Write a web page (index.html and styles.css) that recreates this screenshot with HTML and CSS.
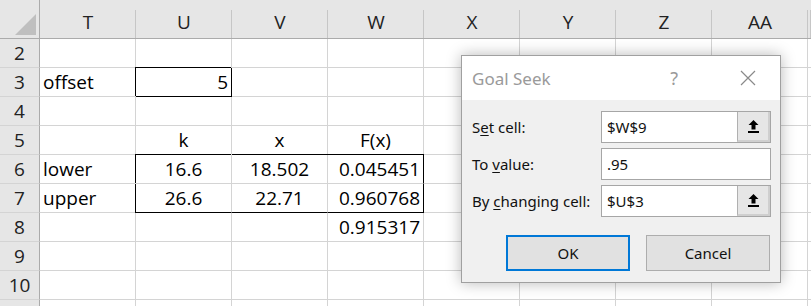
FILE: index.html
```html
<!DOCTYPE html>
<html>
<head>
<meta charset="utf-8">
<link rel="stylesheet" href="styles.css">
</head>
<body>
<div class="sheet">
  <div class="corner"><svg width="22" height="22" viewBox="0 0 22 22"><polygon points="21,0 21,21 0,21" fill="#bfbfbf"/></svg></div>
  <div class="ch">T</div><div class="ch">U</div><div class="ch">V</div><div class="ch">W</div><div class="ch">X</div><div class="ch">Y</div><div class="ch">Z</div><div class="ch">AA</div><div class="ch edge"></div>

  <div class="rh">2</div><div class="c"></div><div class="c"></div><div class="c"></div><div class="c"></div><div class="c"></div><div class="c"></div><div class="c"></div><div class="c"></div><div class="c edge"></div>

  <div class="rh">3</div><div class="c">offset</div><div class="c r box-all">5</div><div class="c"></div><div class="c"></div><div class="c"></div><div class="c"></div><div class="c"></div><div class="c"></div><div class="c edge"></div>

  <div class="rh">4</div><div class="c"></div><div class="c"></div><div class="c"></div><div class="c"></div><div class="c"></div><div class="c"></div><div class="c"></div><div class="c"></div><div class="c edge"></div>

  <div class="rh">5</div><div class="c"></div><div class="c m">k</div><div class="c m">x</div><div class="c m">F(x)</div><div class="c"></div><div class="c"></div><div class="c"></div><div class="c"></div><div class="c edge"></div>

  <div class="rh">6</div><div class="c">lower</div><div class="c m box-tl">16.6</div><div class="c m box-t">18.502</div><div class="c r box-tr">0.045451</div><div class="c"></div><div class="c"></div><div class="c"></div><div class="c"></div><div class="c edge"></div>

  <div class="rh">7</div><div class="c">upper</div><div class="c m box-bl">26.6</div><div class="c m box-b">22.71</div><div class="c r box-br">0.960768</div><div class="c"></div><div class="c"></div><div class="c"></div><div class="c"></div><div class="c edge"></div>

  <div class="rh">8</div><div class="c"></div><div class="c"></div><div class="c"></div><div class="c r">0.915317</div><div class="c"></div><div class="c"></div><div class="c"></div><div class="c"></div><div class="c edge"></div>

  <div class="rh">9</div><div class="c"></div><div class="c"></div><div class="c"></div><div class="c"></div><div class="c"></div><div class="c"></div><div class="c"></div><div class="c"></div><div class="c edge"></div>

  <div class="rh">10</div><div class="c"></div><div class="c"></div><div class="c"></div><div class="c"></div><div class="c"></div><div class="c"></div><div class="c"></div><div class="c"></div><div class="c edge"></div>

  <div class="rh"></div><div class="c"></div><div class="c"></div><div class="c"></div><div class="c"></div><div class="c"></div><div class="c"></div><div class="c"></div><div class="c"></div><div class="c edge"></div>
</div>

<div class="dialog">
  <div class="titlebar">
    <span class="title">Goal Seek</span>
    <span class="help">?</span>
    <svg class="close" width="16" height="16" viewBox="0 0 16 16"><path d="M1 1 L15 15 M15 1 L1 15" stroke="#8a8a8a" stroke-width="1.2" fill="none"/></svg>
  </div>
  <div class="body">
    <div class="field">
      <label class="lbl">S<u>e</u>t cell:</label>
      <div class="input"><span class="val">$W$9</span>
        <span class="pick"><svg width="11" height="13" viewBox="0 0 11 13"><polygon points="5.5,0 10.5,5 7.5,5 7.5,9.5 3.5,9.5 3.5,5 0.5,5" fill="#000"/><rect x="0" y="11" width="11" height="2" fill="#000"/></svg></span>
      </div>
    </div>
    <div class="field">
      <label class="lbl">To <u>v</u>alue:</label>
      <div class="input"><span class="val">.95</span></div>
    </div>
    <div class="field">
      <label class="lbl">By <u>c</u>hanging cell:</label>
      <div class="input"><span class="val">$U$3</span>
        <span class="pick"><svg width="11" height="13" viewBox="0 0 11 13"><polygon points="5.5,0 10.5,5 7.5,5 7.5,9.5 3.5,9.5 3.5,5 0.5,5" fill="#000"/><rect x="0" y="11" width="11" height="2" fill="#000"/></svg></span>
      </div>
    </div>
    <div class="buttons">
      <button class="btn ok">OK</button>
      <button class="btn">Cancel</button>
    </div>
  </div>
</div>
</body>
</html>
```

FILE: styles.css
```css
html, body {
  margin: 0;
  padding: 0;
  background: #fff;
  overflow: hidden;
}
body {
  width: 811px;
  height: 306px;
  position: relative;
}
.sheet {
  display: grid;
  grid-template-columns: 40px repeat(8, 96px) 3px;
  grid-template-rows: 39px repeat(9, 29px) 7px;
  font-family: "Open Sans", sans-serif;
  font-size: 19px;
  color: #000;
  overflow: hidden;
  height: 306px;
}
.sheet > div {
  box-sizing: border-box;
  display: flex;
  align-items: flex-end;
  line-height: 26px;
  white-space: nowrap;
}
.corner {
  background: #e6e6e6;
  border-right: 1px solid #ababab;
  border-bottom: 1px solid #ababab;
  justify-content: flex-end;
  align-items: flex-start !important;
  padding: 14px 2px 0 0;
}
.corner svg { display: block; }
.ch {
  background: #e6e6e6 linear-gradient(#c6c6c6, #c6c6c6) right bottom / 1px 28px no-repeat;
  border-bottom: 1px solid #ababab;
  justify-content: center;
  color: #222;
  padding-bottom: 3px;
}
.rh {
  background: #e6e6e6;
  border-right: 1px solid #ababab;
  border-bottom: 1px solid #d4d4d4;
  justify-content: center;
  color: #222;
  padding-bottom: 1px;
}
.c {
  border-right: 1px solid #d4d4d4;
  border-bottom: 1px solid #d4d4d4;
  padding: 0 3px 1px 3px;
}
.edge { border-right: none !important; }
.r { justify-content: flex-end; }
.m { justify-content: center; }

.box-all { border-color: #000 !important; box-shadow: -1px -1px 0 #000; }
.box-tl { box-shadow: -1px -1px 0 #000; }
.box-t { box-shadow: 0 -1px 0 #000; }
.box-tr { box-shadow: 0 -1px 0 #000; border-right-color: #000 !important; }
.box-bl { box-shadow: -1px 0 0 #000; border-bottom-color: #000 !important; }
.box-b { border-bottom-color: #000 !important; }
.box-br { border-right-color: #000 !important; border-bottom-color: #000 !important; }

.dialog {
  position: absolute;
  left: 461px;
  top: 55px;
  width: 320px;
  height: 228px;
  box-sizing: border-box;
  border: 1px solid #a0a0a0;
  background: #f0f0f0;
  box-shadow: 0 0 14px rgba(0, 0, 0, 0.28);
  font-family: "Noto Sans", sans-serif;
  display: flex;
  flex-direction: column;
}
.titlebar {
  height: 44px;
  background: #fff;
  display: flex;
  align-items: center;
  padding: 0 24px 0 10px;
}
.title {
  font-size: 17px;
  color: #9a9a9a;
  flex: 1;
}
.help {
  font-size: 18px;
  color: #9a9a9a;
  margin-right: 62px;
}
.close { display: block; }
.body {
  padding: 11px 9px 0 10px;
  display: flex;
  flex-direction: column;
  gap: 5px;
}
.field {
  display: flex;
  align-items: center;
  height: 32px;
}
.lbl {
  width: 129px;
  font-size: 15px;
  color: #111;
}
.lbl u { text-underline-offset: 2px; }
.input {
  flex: 1;
  height: 32px;
  box-sizing: border-box;
  background: #fff;
  border: 1px solid #a6a6a6;
  display: flex;
  align-items: center;
}
.val {
  flex: 1;
  font-size: 15px;
  padding-left: 5px;
  color: #111;
}
.pick {
  width: 33px;
  height: 30px;
  box-sizing: border-box;
  background: #e6e6e6;
  border-left: 1px solid #b0b0b0;
  border-right: 2px solid #cfcfcf;
  border-bottom: 2px solid #cfcfcf;
  display: flex;
  align-items: center;
  justify-content: center;
}
.pick svg { display: block; }
.buttons {
  display: flex;
  justify-content: flex-end;
  gap: 16px;
  margin-top: 13px;
  padding-right: 1px;
}
.btn {
  width: 124px;
  height: 36px;
  box-sizing: border-box;
  background: #e1e1e1;
  border: 1px solid #adadad;
  font-family: "Noto Sans", sans-serif;
  font-size: 15px;
  color: #111;
  padding: 0;
}
.btn.ok {
  border: 2px solid #0078d7;
}
```
